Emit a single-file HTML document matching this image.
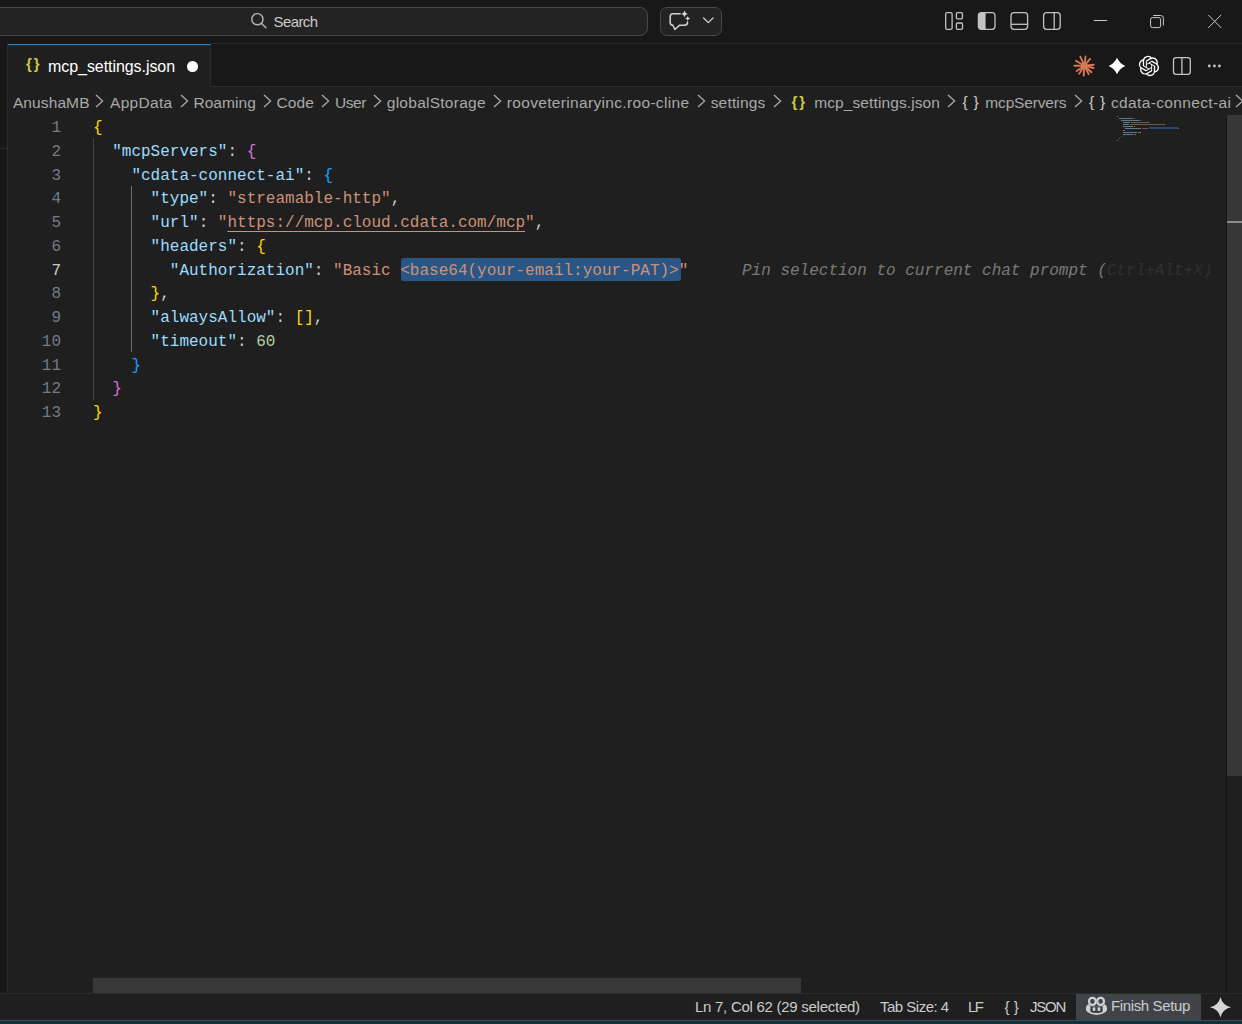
<!DOCTYPE html>
<html><head><meta charset="utf-8">
<style>
*{box-sizing:border-box;margin:0;padding:0}
html,body{width:1242px;height:1024px;overflow:hidden;background:#1f1f1f;font-family:"Liberation Sans",sans-serif;color:#ccc}
.abs{position:absolute}
svg{position:absolute;overflow:visible}
#title{left:0;top:0;width:1242px;height:44px;background:#181818}
#search{left:-20px;top:7px;width:668px;height:29px;background:#232323;border:1px solid #484848;border-radius:8px}
#search span{position:absolute;left:292.5px;top:4px;font-size:15px;line-height:20px;color:#ccc;letter-spacing:-0.6px}
#chatbtn{left:660px;top:7px;width:62px;height:29px;background:#232323;border:1px solid #484848;border-radius:7px}
#tabs{left:0;top:43px;width:1242px;height:44px;background:#181818;border-bottom:1px solid #2b2b2b}
#tabline{left:210px;top:43px;width:1032px;height:1px;background:#2b2b2b}
#leftbar{left:0;top:44px;width:8px;height:950px;background:#181818;border-right:1px solid #2b2b2b}
#tab{left:8px;top:44px;width:203px;height:43px;background:#1f1f1f;border-top:1px solid #3b7aa8;box-shadow:inset 0 1px 0 #0a3454;border-right:1px solid #2b2b2b}
#tab .name{position:absolute;left:40px;top:11.5px;font-size:16px;line-height:20px;color:#fff;letter-spacing:-0.06px}
#tab .ico{position:absolute;left:18px;top:9px;font-size:15px;line-height:20px;color:#cbcb41;font-weight:bold;letter-spacing:2px}
#tab .dot{position:absolute;left:179.3px;top:16.3px;width:10.6px;height:10.6px;border-radius:50%;background:#fff}
#crumbs{left:0;top:87px;width:1242px;height:27px;overflow:hidden}
#crumbs .c{position:absolute;top:6px;font-size:15.5px;line-height:20px;color:#a9a9a9;white-space:pre}
#crumbs .chev{position:absolute;top:7.3px;margin-left:-1px}
#crumbs .bi{position:absolute;top:5px;font-size:15px;line-height:20px;font-weight:bold;white-space:pre}
#crumbs .bi.y{color:#cbcb41;letter-spacing:2px}#crumbs .bi.w{color:#ccc;font-weight:normal;letter-spacing:.8px;font-size:15.5px}
.ln{position:absolute;left:0;width:61px;text-align:right;color:#757b84;height:23.75px;font-family:"Liberation Mono",monospace;font-size:16px;line-height:23.75px}
.ln.cur{color:#ccc}
.cl{position:absolute;left:93px;height:23.75px;font-family:"Liberation Mono",monospace;font-size:16px;line-height:23.75px;white-space:pre;color:#ccc}
.cl u{text-underline-offset:4px;text-decoration-thickness:1px}
.k{color:#9cdcfe}.s{color:#ce9178}.n{color:#b5cea8}.b1{color:#ffd700}.b2{color:#da70d6}.b3{color:#179fff}
.sel{}
#selbox{position:absolute;left:401px;top:258px;width:280px;height:23px;background:#2a5685;border-radius:3px}
.ghost{color:#7a7a7a;font-style:italic}.ghost i{color:#303030}
.guide{position:absolute;width:1px;background:#404040}
#mm i{position:absolute;height:1.4px;opacity:.5;display:block}
#vscroll{left:1227px;top:115px;width:15px;height:661px;background:#373737}
#vborder{left:1226px;top:115px;width:1px;height:878px;background:#141414}
#leftline{left:0;top:148px;width:7px;height:1px;background:#2b2b2b}
#vmark{left:1227px;top:221px;width:15px;height:2px;background:#8c8c8c}
#hscroll{left:93px;top:978px;width:708px;height:15px;background:#383838}
#status{left:0;top:993px;width:1242px;height:27px;background:#1f1f1f;border-top:1px solid #2b2b2b;font-size:15px;color:#ccc}
#status span{position:absolute;top:3px;line-height:20px;white-space:pre}
#finish{left:1076px;top:994px;width:125px;height:26px;background:#404448;font-size:15px}
#finish span{position:absolute;left:35px;top:2px;line-height:20px;white-space:pre;letter-spacing:-0.37px;color:#ccc}
#bottom{left:0;top:1020px;width:1242px;height:4px;background:#16303b;border-top:1px solid #33505c}
</style></head><body>
<div class="abs" id="title"></div>
<div class="abs" id="search"><span>Search</span></div>
<div class="abs" id="chatbtn"></div>
<div class="abs" id="tabs"></div>
<div class="abs" id="tabline"></div>
<div class="abs" id="leftbar"></div>
<div class="abs" id="tab"><span class="ico">{}</span><span class="name">mcp_settings.json</span><span class="dot"></span></div>
<div class="abs" id="crumbs">
<span class="c" style="left:12.9px;letter-spacing:0.109px">AnushaMB</span>
<span class="c" style="left:110.0px;letter-spacing:0.310px">AppData</span>
<span class="c" style="left:193.4px;letter-spacing:0.081px">Roaming</span>
<span class="c" style="left:276.6px;letter-spacing:0.085px">Code</span>
<span class="c" style="left:335.0px;letter-spacing:-0.432px">User</span>
<span class="c" style="left:386.8px;letter-spacing:0.256px">globalStorage</span>
<span class="c" style="left:506.8px;letter-spacing:0.330px">rooveterinaryinc.roo-cline</span>
<span class="c" style="left:710.7px;letter-spacing:0.172px">settings</span>
<span class="c" style="left:814.2px;letter-spacing:0.102px">mcp_settings.json</span>
<span class="c" style="left:985.3px;letter-spacing:-0.159px">mcpServers</span>
<span class="c" style="left:1111.0px;letter-spacing:0.357px">cdata-connect-ai</span>
<svg class="chev" style="left:96.0px" width="9" height="14" viewBox="0 0 9 14"><path d="M1 1 L7.6 7 L1 13" fill="none" stroke="#a9a9a9" stroke-width="1.3"/></svg>
<svg class="chev" style="left:181.0px" width="9" height="14" viewBox="0 0 9 14"><path d="M1 1 L7.6 7 L1 13" fill="none" stroke="#a9a9a9" stroke-width="1.3"/></svg>
<svg class="chev" style="left:264.0px" width="9" height="14" viewBox="0 0 9 14"><path d="M1 1 L7.6 7 L1 13" fill="none" stroke="#a9a9a9" stroke-width="1.3"/></svg>
<svg class="chev" style="left:321.5px" width="9" height="14" viewBox="0 0 9 14"><path d="M1 1 L7.6 7 L1 13" fill="none" stroke="#a9a9a9" stroke-width="1.3"/></svg>
<svg class="chev" style="left:374.0px" width="9" height="14" viewBox="0 0 9 14"><path d="M1 1 L7.6 7 L1 13" fill="none" stroke="#a9a9a9" stroke-width="1.3"/></svg>
<svg class="chev" style="left:494.0px" width="9" height="14" viewBox="0 0 9 14"><path d="M1 1 L7.6 7 L1 13" fill="none" stroke="#a9a9a9" stroke-width="1.3"/></svg>
<svg class="chev" style="left:698.0px" width="9" height="14" viewBox="0 0 9 14"><path d="M1 1 L7.6 7 L1 13" fill="none" stroke="#a9a9a9" stroke-width="1.3"/></svg>
<svg class="chev" style="left:773.5px" width="9" height="14" viewBox="0 0 9 14"><path d="M1 1 L7.6 7 L1 13" fill="none" stroke="#a9a9a9" stroke-width="1.3"/></svg>
<svg class="chev" style="left:948.0px" width="9" height="14" viewBox="0 0 9 14"><path d="M1 1 L7.6 7 L1 13" fill="none" stroke="#a9a9a9" stroke-width="1.3"/></svg>
<svg class="chev" style="left:1074.6px" width="9" height="14" viewBox="0 0 9 14"><path d="M1 1 L7.6 7 L1 13" fill="none" stroke="#a9a9a9" stroke-width="1.3"/></svg>
<svg class="chev" style="left:1236.0px" width="9" height="14" viewBox="0 0 9 14"><path d="M1 1 L7.6 7 L1 13" fill="none" stroke="#a9a9a9" stroke-width="1.3"/></svg>
<span class="bi y" style="left:791.5px">{}</span>
<span class="bi w" style="left:962.5px">{ }</span>
<span class="bi w" style="left:1089px">{ }</span>
</div>
<div class="abs" id="editor">
<div id="selbox"></div>
<div class="ln" style="top:117.0px">1</div><div class="cl" style="top:117.0px"><span class="b1">{</span></div>
<div class="ln" style="top:140.75px">2</div><div class="cl" style="top:140.75px">  <span class="k">"mcpServers"</span>: <span class="b2">{</span></div>
<div class="ln" style="top:164.5px">3</div><div class="cl" style="top:164.5px">    <span class="k">"cdata-connect-ai"</span>: <span class="b3">{</span></div>
<div class="ln" style="top:188.25px">4</div><div class="cl" style="top:188.25px">      <span class="k">"type"</span>: <span class="s">"streamable-http"</span>,</div>
<div class="ln" style="top:212.0px">5</div><div class="cl" style="top:212.0px">      <span class="k">"url"</span>: <span class="s">"<u>https://mcp.cloud.cdata.com/mcp</u>"</span>,</div>
<div class="ln" style="top:235.75px">6</div><div class="cl" style="top:235.75px">      <span class="k">"headers"</span>: <span class="b1">{</span></div>
<div class="ln cur" style="top:259.5px">7</div><div class="cl" style="top:259.5px">        <span class="k">"Authorization"</span>: <span class="s">"Basic <span class="sel">&lt;base64(your-email:your-PAT)&gt;</span>"</span></div>
<div class="ln" style="top:283.25px">8</div><div class="cl" style="top:283.25px">      <span class="b1">}</span>,</div>
<div class="ln" style="top:307.0px">9</div><div class="cl" style="top:307.0px">      <span class="k">"alwaysAllow"</span>: <span class="b1">[]</span>,</div>
<div class="ln" style="top:330.75px">10</div><div class="cl" style="top:330.75px">      <span class="k">"timeout"</span>: <span class="n">60</span></div>
<div class="ln" style="top:354.5px">11</div><div class="cl" style="top:354.5px">    <span class="b3">}</span></div>
<div class="ln" style="top:378.25px">12</div><div class="cl" style="top:378.25px">  <span class="b2">}</span></div>
<div class="ln" style="top:402.0px">13</div><div class="cl" style="top:402.0px"><span class="b1">}</span></div>
<div class="cl ghost" style="top:259.5px;left:742px">Pin selection to current chat prompt (<i>Ctrl+Alt+X)</i></div>
<div class="guide" style="left:93px;top:138.25px;height:261.25px"></div>
<div class="guide" style="left:131px;top:185.75px;height:166.25px;background:#707070"></div>
<div id="mm"><i style="left:1117px;top:115.5px;width:1px;background:#ffd700"></i><i style="left:1119px;top:117.5px;width:13px;background:#9cdcfe"></i><i style="left:1132px;top:117.5px;width:1px;background:#ccc"></i><i style="left:1134px;top:117.5px;width:1px;background:#da70d6"></i><i style="left:1121px;top:119.5px;width:18px;background:#9cdcfe"></i><i style="left:1139px;top:119.5px;width:1px;background:#ccc"></i><i style="left:1141px;top:119.5px;width:1px;background:#179fff"></i><i style="left:1123px;top:121.5px;width:6px;background:#9cdcfe"></i><i style="left:1129px;top:121.5px;width:1px;background:#ccc"></i><i style="left:1131px;top:121.5px;width:17px;background:#ce9178"></i><i style="left:1148px;top:121.5px;width:1px;background:#ccc"></i><i style="left:1123px;top:123.5px;width:5px;background:#9cdcfe"></i><i style="left:1128px;top:123.5px;width:1px;background:#ccc"></i><i style="left:1130px;top:123.5px;width:34px;background:#ce9178"></i><i style="left:1164px;top:123.5px;width:1px;background:#ccc"></i><i style="left:1123px;top:125.5px;width:9px;background:#9cdcfe"></i><i style="left:1132px;top:125.5px;width:1px;background:#ccc"></i><i style="left:1134px;top:125.5px;width:1px;background:#ffd700"></i><i style="left:1125px;top:127.5px;width:15px;background:#9cdcfe"></i><i style="left:1140px;top:127.5px;width:1px;background:#ccc"></i><i style="left:1142px;top:127.5px;width:6px;background:#ce9178"></i><i style="left:1149px;top:127.0px;width:29px;height:2px;background:#234a72;opacity:1"></i><i style="left:1178px;top:127.5px;width:1px;background:#ce9178"></i><i style="left:1123px;top:129.5px;width:1px;background:#ffd700"></i><i style="left:1124px;top:129.5px;width:1px;background:#ccc"></i><i style="left:1123px;top:131.5px;width:13px;background:#9cdcfe"></i><i style="left:1136px;top:131.5px;width:1px;background:#ccc"></i><i style="left:1138px;top:131.5px;width:2px;background:#ffd700"></i><i style="left:1140px;top:131.5px;width:1px;background:#ccc"></i><i style="left:1123px;top:133.5px;width:9px;background:#9cdcfe"></i><i style="left:1132px;top:133.5px;width:1px;background:#ccc"></i><i style="left:1134px;top:133.5px;width:2px;background:#b5cea8"></i><i style="left:1121px;top:135.5px;width:1px;background:#179fff"></i><i style="left:1119px;top:137.5px;width:1px;background:#da70d6"></i><i style="left:1117px;top:139.5px;width:1px;background:#ffd700"></i></div>
</div>
<div class="abs" id="vscroll"></div>
<div class="abs" id="vborder"></div>
<div class="abs" id="leftline"></div>
<div class="abs" id="vmark"></div>
<div class="abs" id="hscroll"></div>
<div class="abs" id="status">
<span style="left:695px;letter-spacing:-0.27px">Ln 7, Col 62 (29 selected)</span>
<span style="left:880px;letter-spacing:-0.5px">Tab Size: 4</span>
<span style="left:968px;letter-spacing:-1.5px">LF</span>
<span style="left:1004.5px;letter-spacing:0">{ }</span>
<span style="left:1030px;letter-spacing:-1.2px">JSON</span>
</div>
<div class="abs" id="finish"><span>Finish Setup</span></div>
<svg id="icons" class="abs" style="left:0;top:0" width="1242" height="1024" viewBox="0 0 1242 1024">
<!-- search magnifier -->
<g fill="none" stroke="#b8b8b8" stroke-width="1.4" stroke-linecap="round">
<circle cx="257.4" cy="19.2" r="5.6"/><path d="M261.5 23.4 L266 27.8"/>
</g>
<!-- chat icon -->
<g fill="none" stroke="#d0d0d0" stroke-width="1.55" stroke-linecap="round" stroke-linejoin="round">
<path d="M680.2 13.7 H673 Q670.2 13.7 670.2 16.5 V22.4 Q670.2 25.2 673 25.2 H672.9 L674.8 29.5 L679.7 25.2 H684.6 Q687.5 25.2 687.5 22.6 V22.1"/>
<path d="M703.6 18 L708.3 22.6 L713 18" stroke-width="1.3"/>
</g>
<path fill="#d8d8d8" d="M684.5 10.6 Q685 13.4 687.8 13.9 Q685 14.4 684.5 17.2 Q684 14.4 681.2 13.9 Q684 13.4 684.5 10.6Z M687.7 15.9 Q688.1 18.1 690.3 18.5 Q688.1 18.9 687.7 21.1 Q687.3 18.9 685.1 18.5 Q687.3 18.1 687.7 15.9Z"/>
<!-- layout icons -->
<g fill="none" stroke="#c2c2c2" stroke-width="1.3">
<rect x="945.7" y="12.7" width="6.4" height="16.6" rx="1.4"/>
<rect x="956.4" y="12.7" width="6.1" height="6.1" rx="1.2"/>
<rect x="956.4" y="23" width="6.1" height="6.3" rx="1.2"/>
<rect x="978.4" y="12.7" width="16.6" height="16.6" rx="3"/>
<rect x="1011" y="12.7" width="16.6" height="16.6" rx="3"/>
<path d="M1011 24.3 H1027.6"/>
<rect x="1043.6" y="12.7" width="16.6" height="16.6" rx="3"/>
<path d="M1054.2 12.7 V29.3"/>
</g>
<path fill="#c2c2c2" d="M981.4 12.7 H985.6 V29.3 H981.4 Q978.4 29.3 978.4 26.3 V15.7 Q978.4 12.7 981.4 12.7Z"/>
<!-- window controls -->
<g fill="none" stroke="#c8c8c8" stroke-width="1">
<path d="M1093.8 20.5 H1107.2"/>
<rect x="1150.6" y="17.6" width="10" height="10" rx="1.8"/>
<path d="M1153.2 15.5 H1160.6 Q1163.4 15.5 1163.4 18.3 V25.4"/>
<path d="M1208.2 14.9 L1221.2 27.9 M1221.2 14.9 L1208.2 27.9"/>
</g>
<!-- claude burst -->
<g stroke="#d97757" stroke-width="1.9" stroke-linecap="round" transform="translate(1084.5 65.7)">
<path d="M0 0 L-4.2 -9"/><path d="M0 0 L1 -9.2"/><path d="M0 0 L5.6 -6.8"/><path d="M0 0 L9.2 -1"/>
<path d="M0 0 L9 2.3"/><path d="M0 0 L6.9 6.6"/><path d="M0 0 L4.1 8.4"/><path d="M0 0 L-0.8 9.9"/>
<path d="M0 0 L-5.3 8.1"/><path d="M0 0 L-7.9 5.3"/><path d="M0 0 L-10.1 0"/><path d="M0 0 L-8.6 -5"/>
<circle r="3.2" fill="#d97757" stroke="none"/>
</g>
<!-- gemini star -->
<path fill="#ffffff" transform="translate(1117 66)" d="M0 -8.3 Q2.6 -2.6 8.3 0 Q2.6 2.6 0 8.3 Q-2.6 2.6 -8.3 0 Q-2.6 -2.6 0 -8.3Z"/>
<!-- openai -->
<g transform="translate(1138.8 55.8) scale(0.848)" fill="#ffffff">
<path d="M22.2819 9.8211a5.9847 5.9847 0 0 0-.5157-4.9108 6.0462 6.0462 0 0 0-6.5098-2.9A6.0651 6.0651 0 0 0 4.9807 4.1818a5.9847 5.9847 0 0 0-3.9977 2.9 6.0462 6.0462 0 0 0 .7427 7.0966 5.98 5.98 0 0 0 .511 4.9107 6.051 6.051 0 0 0 6.5146 2.9001A5.9847 5.9847 0 0 0 13.2599 24a6.0557 6.0557 0 0 0 5.7718-4.2058 5.9894 5.9894 0 0 0 3.9977-2.9001 6.0557 6.0557 0 0 0-.7475-7.0729zm-9.022 12.6081a4.4755 4.4755 0 0 1-2.8764-1.0408l.1419-.0804 4.7783-2.7582a.7948.7948 0 0 0 .3927-.6813v-6.7369l2.02 1.1686a.071.071 0 0 1 .038.052v5.5826a4.504 4.504 0 0 1-4.4945 4.4944zm-9.6607-4.1254a4.4708 4.4708 0 0 1-.5346-3.0137l.142.0852 4.783 2.7582a.7712.7712 0 0 0 .7806 0l5.8428-3.3685v2.3324a.0804.0804 0 0 1-.0332.0615L9.74 19.9502a4.4992 4.4992 0 0 1-6.1408-1.6464zM2.3408 7.8956a4.485 4.485 0 0 1 2.3655-1.9728V11.6a.7664.7664 0 0 0 .3879.6765l5.8144 3.3543-2.0201 1.1685a.0757.0757 0 0 1-.071 0l-4.8303-2.7865A4.504 4.504 0 0 1 2.3408 7.872zm16.5963 3.8558L13.1038 8.364 15.1192 7.2a.0757.0757 0 0 1 .071 0l4.8303 2.7913a4.4944 4.4944 0 0 1-.6765 8.1042v-5.6772a.79.79 0 0 0-.407-.667zm2.0107-3.0231l-.142-.0852-4.7735-2.7818a.7759.7759 0 0 0-.7854 0L9.409 9.2297V6.8974a.0662.0662 0 0 1 .0284-.0615l4.8303-2.7866a4.4992 4.4992 0 0 1 6.6802 4.66zM8.3065 12.863l-2.02-1.1638a.0804.0804 0 0 1-.038-.0567V6.0742a4.4992 4.4992 0 0 1 7.3757-3.4537l-.142.0805L8.704 5.459a.7948.7948 0 0 0-.3927.6813zm1.0976-2.3654l2.602-1.4998 2.6069 1.4998v2.9994l-2.5974 1.4997-2.6067-1.4997Z"/>
</g>
<!-- split editor -->
<g fill="none" stroke="#c5c5c5" stroke-width="1.3">
<rect x="1173.5" y="57.7" width="16.8" height="16.6" rx="2.6"/>
<path d="M1181.9 57.7 V74.3"/>
</g>
<g fill="#c5c5c5"><circle cx="1209.3" cy="66" r="1.4"/><circle cx="1214.4" cy="66" r="1.4"/><circle cx="1219.4" cy="66" r="1.4"/></g>
<!-- status sparkle -->
<path fill="#d6d6d6" transform="translate(1220.5 1007.2)" d="M0 -10.3 Q1.9 -1.9 10.6 0 Q1.9 1.9 0 10.3 Q-1.9 1.9 -10.6 0 Q-1.9 -1.9 0 -10.3Z"/>
<!-- copilot -->
<g transform="translate(1086 996.7)">
<path fill="#d2d2d2" fill-rule="evenodd" d="M2.6 7.2 Q0 8.6 0 11 V12.6 Q0 14.2 1.4 15.2 Q5.6 18.3 10.5 18.3 Q15.4 18.3 19.6 15.2 Q21 14.2 21 12.6 V11 Q21 8.6 18.4 7.2 L17 9.4 H4 Z M4.3 9.5 H16.7 V14.3 Q16.7 15.2 15.8 15.5 Q13 16.4 10.5 16.4 Q8 16.4 5.2 15.5 Q4.3 15.2 4.3 14.3Z"/>
<rect x="3.1" y="1.1" width="6.6" height="7" rx="3.1" fill="none" stroke="#d2d2d2" stroke-width="2.2"/>
<rect x="11.3" y="1.1" width="6.6" height="7" rx="3.1" fill="none" stroke="#d2d2d2" stroke-width="2.2"/>
<rect x="6.8" y="10.6" width="2.5" height="3.7" rx="1" fill="#d2d2d2"/>
<rect x="11.7" y="10.6" width="2.5" height="3.7" rx="1" fill="#d2d2d2"/>
</g>
</svg>
<div class="abs" id="bottom"></div>
</body></html>
